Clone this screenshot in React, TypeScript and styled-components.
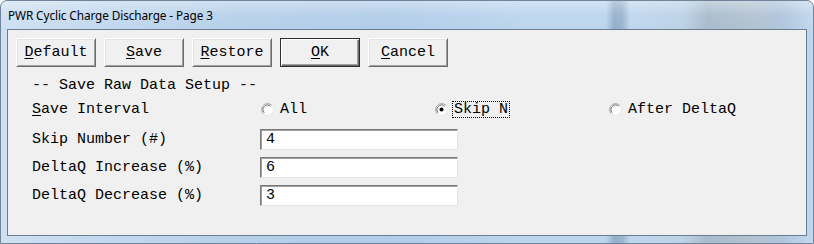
import React from "react";
import styled, { createGlobalStyle } from "styled-components";

const Global = createGlobalStyle`
  html, body { margin: 0; padding: 0; background: #ffffff; }
  #root { width: 814px; height: 244px; }
`;

const Window = styled.div`
  box-sizing: border-box;
  width: 814px;
  height: 244px;
  border: 1px solid #6f849b;
  border-radius: 7px 7px 0 0;
  padding: 0 6px 7px;
  display: flex;
  flex-direction: column;
  background:
    linear-gradient(180deg, rgba(255,255,255,0.35) 0px, rgba(255,255,255,0.05) 14px, rgba(255,255,255,0) 28px),
    linear-gradient(90deg,
      #cfe0f2 0%, #c3d9ef 12%, #b6d0ea 30%, #b2cde9 48%, #bcd5ee 64%,
      #bcd5ee 74.5%, #94afca 75.5%, #9ab4cf 76.5%, #bfd7ee 77.5%,
      #bcd2e6 84%, #a9bccd 87%, #b3c3d2 93%, #aec5dc 96%, #c2d8ee 100%);
`;

const TitleBar = styled.div`
  height: 28px;
  display: flex;
  align-items: center;
  padding: 0 0 1px 1px;
  box-sizing: border-box;
`;

const TitleText = styled.span`
  font-family: "Noto Sans", "Open Sans", sans-serif;
  font-size: 11.8px;
  color: #000;
  letter-spacing: -0.1px;
`;

const Client = styled.div`
  flex: 1;
  background: #f0f0f0;
  border: 1px solid #6b7d91;
  display: flex;
  flex-direction: column;
  padding: 8px 0 0 8px;
  font-family: "Liberation Mono", "Courier New", monospace;
  font-size: 15px;
  color: #000;
`;

const ButtonRow = styled.div`
  display: flex;
  gap: 8px;
`;

const Button = styled.button<{ $default?: boolean }>`
  box-sizing: border-box;
  width: 80px;
  height: 29px;
  padding: 0;
  margin: 0;
  background: #f0f0f0;
  font-family: inherit;
  font-size: 15px;
  color: #000;
  display: flex;
  align-items: center;
  justify-content: center;
  border: 1px solid;
  border-color: ${(p) => (p.$default ? "#2e2e2e" : "#ffffff #696969 #696969 #ffffff")};
  box-shadow: ${(p) =>
    p.$default
      ? "inset 1px 1px 0 #ffffff, inset -1px -1px 0 #696969, inset -2px -2px 0 #a0a0a0"
      : "inset 1px 1px 0 #e3e3e3, inset -1px -1px 0 #a0a0a0"};
  cursor: default;
`;

const Key = styled.span`
  text-decoration: underline;
  text-underline-offset: 2px;
`;

const Form = styled.div`
  display: flex;
  flex-direction: column;
  padding-left: 16px;
  margin-top: 10px;
`;

const SectionTitle = styled.div`
  height: 17px;
  line-height: 17px;
  white-space: pre;
`;

const Row = styled.div<{ $mt: number; $h: number }>`
  display: grid;
  grid-template-columns: 228px 174px 174px 174px;
  align-items: center;
  margin-top: ${(p) => p.$mt}px;
  height: ${(p) => p.$h}px;
`;

const Label = styled.div`
  white-space: pre;
`;

const TextBox = styled.div`
  box-sizing: border-box;
  width: 198px;
  height: 21px;
  background: #ffffff;
  border: 1px solid;
  border-color: #7a7a7a #e3e3e3 #e3e3e3 #7a7a7a;
  box-shadow: inset 1px 1px 0 #a0a0a0;
  padding-left: 5px;
  display: flex;
  align-items: center;
`;

const RadioItem = styled.div`
  display: flex;
  align-items: center;
  gap: 5px;
  padding-left: 1px;
  white-space: pre;
`;

const RadioText = styled.span<{ $focus?: boolean }>`
  padding: 0 1px;
  outline: ${(p) => (p.$focus ? "1px dotted #000" : "none")};
  line-height: 15px;
`;

const RadioIcon = ({ checked }: { checked?: boolean }) => (
  <svg width="13" height="13" viewBox="0 0 13 13">
    <circle cx="6.5" cy="6.5" r="6" fill="#ffffff" stroke="#e6e6e6" />
    <path d="M2.26 10.74 A6 6 0 0 1 10.74 2.26" fill="none" stroke="#a6a6a6" />
    <path d="M3.32 9.68 A4.5 4.5 0 0 1 9.68 3.32" fill="none" stroke="#6f6f6f" />
    {checked && <circle cx="6.5" cy="6.5" r="2" fill="#000" />}
  </svg>
);

const Radio = ({ label, checked, focus }: { label: string; checked?: boolean; focus?: boolean }) => (
  <RadioItem>
    <RadioIcon checked={checked} />
    <RadioText $focus={focus}>{label}</RadioText>
  </RadioItem>
);

const fields = [
  { label: "Skip Number (#)", value: "4" },
  { label: "DeltaQ Increase (%)", value: "6" },
  { label: "DeltaQ Decrease (%)", value: "3" },
];

export default function App() {
  return (
    <>
      <Global />
      <Window>
        <TitleBar>
          <TitleText>PWR Cyclic Charge Discharge - Page 3</TitleText>
        </TitleBar>
        <Client>
          <ButtonRow>
            <Button><span><Key>D</Key>efault</span></Button>
            <Button><span><Key>S</Key>ave</span></Button>
            <Button><span><Key>R</Key>estore</span></Button>
            <Button $default><span><Key>O</Key>K</span></Button>
            <Button><span><Key>C</Key>ancel</span></Button>
          </ButtonRow>
          <Form>
            <SectionTitle>-- Save Raw Data Setup --</SectionTitle>
            <Row $mt={6} $h={18}>
              <Label><Key>S</Key>ave Interval</Label>
              <Radio label="All" />
              <Radio label="Skip N" checked focus />
              <Radio label="After DeltaQ" />
            </Row>
            {fields.map((f, i) => (
              <Row key={f.label} $mt={i === 0 ? 11 : 7} $h={21}>
                <Label>{f.label}</Label>
                <TextBox>{f.value}</TextBox>
              </Row>
            ))}
          </Form>
        </Client>
      </Window>
    </>
  );
}
